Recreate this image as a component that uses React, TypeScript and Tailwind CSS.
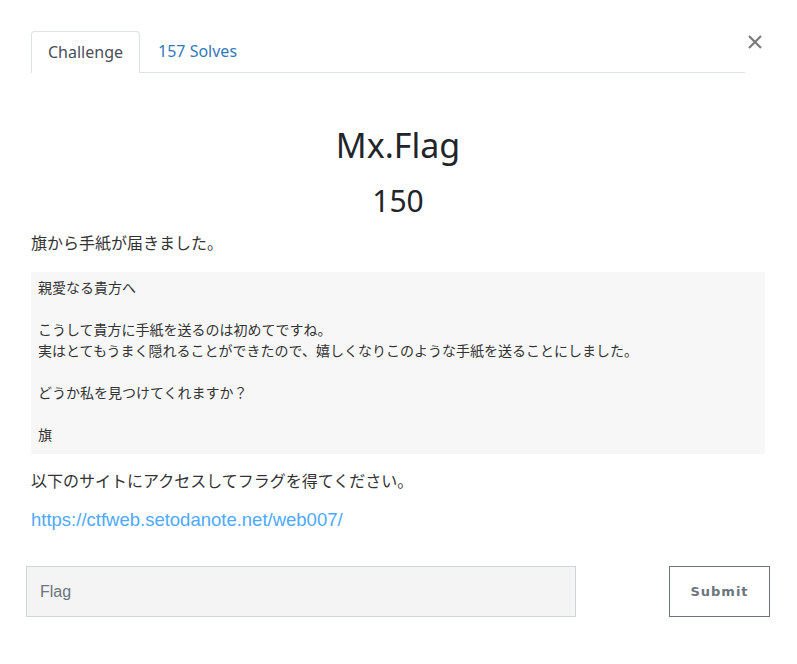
export default function App() {
  return (
    <div className="w-[797px] h-[664px] bg-white overflow-hidden font-['Noto_Sans','Noto_Sans_CJK_JP',sans-serif] text-[#212529]">
      <div className="flex pt-[31px] pl-[31px] pr-[32px]">
        <div className="flex-1 flex items-start h-[42px] border-b border-[#dee2e6]">
          <div className="h-[42px] px-4 pt-[8px] border border-b-0 border-[#dee2e6] rounded-t-[4px] bg-white text-[#495057] text-[16px] leading-6">
            Challenge
          </div>
          <div className="pl-[18px] pr-4 pt-[8px] text-[#337ab7] text-[16px] leading-6">157 Solves</div>
        </div>
        <button className="w-[20px] h-[22px] flex items-center justify-center">
          <svg width="14" height="14" viewBox="0 0 14 14">
            <path d="M1 1 L13 13 M13 1 L1 13" stroke="#7a7a7a" strokeWidth="2.2" />
          </svg>
        </button>
      </div>
      <div className="pl-[31px] pr-[32px]">
        <div className="mt-[52px] text-center text-[34px] leading-[40px] text-[#212529]">Mx.Flag</div>
        <div className="mt-[18px] text-center text-[30px] leading-[36px] text-[#212529]">150</div>
        <div className="mt-[11px] text-[16px] leading-6 text-[#333] font-['Noto_Sans_CJK_JP',sans-serif]">
          旗から手紙が届きました。
        </div>
        <div className="mt-[18px] bg-[#f7f7f7] pt-[5px] pb-[9px] pl-[7px] pr-2 text-[14px] leading-[21px] text-[#333] whitespace-pre-wrap font-['Noto_Sans_CJK_JP',sans-serif]">
          {"親愛なる貴方へ\n\nこうして貴方に手紙を送るのは初めてですね。\n実はとてもうまく隠れることができたので、嬉しくなりこのような手紙を送ることにしました。\n\nどうか私を見つけてくれますか？\n\n旗"}
        </div>
        <div className="mt-[14px] text-[16px] leading-6 text-[#333] font-['Noto_Sans_CJK_JP',sans-serif]">
          以下のサイトにアクセスしてフラグを得てください。
        </div>
        <div className="mt-[15px] text-[18.5px] leading-[26px] font-['Liberation_Sans',sans-serif]">
          <a className="text-[#4ea9ff]">https://ctfweb.setodanote.net/web007/</a>
        </div>
        <div className="mt-[33px] -mx-[5px] flex">
          <input
            placeholder="Flag"
            className="w-[550px] h-[51px] bg-[#f4f4f4] border border-[#ced4da] pl-[13px] text-[16px] font-['Liberation_Sans',sans-serif] placeholder:text-[#6c757d] outline-none"
          />
          <button className="ml-auto w-[101px] h-[51px] border border-[#6c757d] text-[#6c757d] text-[13px] font-bold tracking-[1px] font-['DejaVu_Sans',sans-serif]">
            Submit
          </button>
        </div>
      </div>
    </div>
  );
}
